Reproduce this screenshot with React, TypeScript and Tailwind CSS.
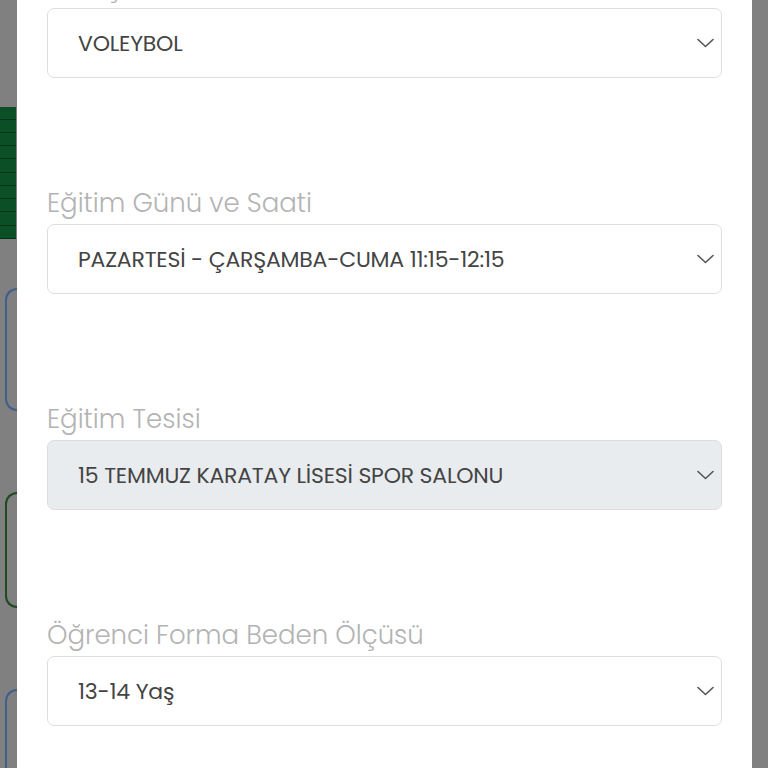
import React from 'react';

const font = { fontFamily: '"Poppins", "Open Sans", "Noto Sans", sans-serif' };

type Field = { label: string; value: string; disabled?: boolean };

const fields: Field[] = [
  { label: 'Branş', value: 'VOLEYBOL' },
  { label: 'Eğitim Günü ve Saati', value: 'PAZARTESİ - ÇARŞAMBA-CUMA 11:15-12:15' },
  { label: 'Eğitim Tesisi', value: '15 TEMMUZ KARATAY LİSESİ SPOR SALONU', disabled: true },
  { label: 'Öğrenci Forma Beden Ölçüsü', value: '13-14 Yaş' },
];

function Chevron() {
  return (
    <svg width="17" height="10" viewBox="0 0 17 10" fill="none" className="shrink-0">
      <path d="M1 1.5l7.5 7 7.5-7" stroke="#555" strokeWidth="1.6" strokeLinecap="round" strokeLinejoin="round" />
    </svg>
  );
}

function SelectField({ label, value, disabled }: Field) {
  return (
    <div className="flex flex-col">
      <label className="text-[26px] leading-[42px] text-[#b3b3b3] font-light">{label}</label>
      <div
        className={`h-[70px] flex items-center justify-between pl-[30px] pr-[7px] rounded-[7px] border border-[#dedede] ${
          disabled ? 'bg-[#e9ecef]' : 'bg-white'
        }`}
      >
        <span className="text-[22px] text-[#444444] tracking-[-0.2px]">{value}</span>
        <Chevron />
      </div>
    </div>
  );
}

function BackdropStrip() {
  return (
    <div className="w-[17px] shrink-0 flex flex-col">
      <div className="h-[108px]" />
      <div className="h-[134px] w-[16px] bg-[#0a4f25] flex flex-col">
        {Array.from({ length: 10 }).map((_, i) => (
          <div key={i} className="flex-1 border-b border-[#053318]" />
        ))}
      </div>
      <div className="h-[50px]" />
      <div className="h-[124px] ml-[5px] rounded-l-[14px] border-2 border-r-0 border-[#3f5f8f]" />
      <div className="h-[82px]" />
      <div className="h-[118px] ml-[5px] rounded-l-[14px] border-2 border-r-0 border-[#1f4a1f]" />
      <div className="h-[82px]" />
      <div className="h-[80px] ml-[5px] rounded-tl-[14px] border-2 border-r-0 border-b-0 border-[#3f5f8f]" />
    </div>
  );
}

export default function App() {
  return (
    <div className="w-[768px] h-[768px] overflow-hidden bg-[#808080] flex" style={font}>
      <BackdropStrip />
      <div className="w-[735px] shrink-0 bg-white overflow-hidden">
        <div className="flex flex-col gap-[104px] px-[30px] mt-[-34px]">
          {fields.map((f) => (
            <SelectField key={f.label} {...f} />
          ))}
        </div>
      </div>
    </div>
  );
}
